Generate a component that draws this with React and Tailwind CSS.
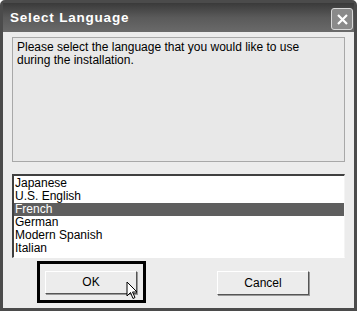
import React from "react";

const langs = ["Japanese", "U.S. English", "French", "German", "Modern Spanish", "Italian"];

const App = () => {
    const selected = "French";

    return (
        <div className="w-[359px] h-[312px] bg-white" style={{ fontFamily: "'Liberation Sans', Arial, sans-serif" }}>
            <div className="w-[357px] h-[311px] flex flex-col border-[3px] border-[#4b4b4b] rounded-t-[5px] bg-[#ececec]">

                {/* TITLE BAR */}
                <div className="h-[29px] flex items-center justify-between pl-[7px] pr-[1px] bg-gradient-to-b from-[#3a3a3a] via-[#5a5a5a] to-[#6a6a6a]">
                    <span className="text-white font-bold text-[13.5px] tracking-[0.8px] mt-[1px]">Select Language</span>
                    <div className="w-[22px] h-[22px] mt-[3px] rounded-[3px] border border-[#d8d8d8] bg-[#8a8a8a] flex items-center justify-center">
                        <svg width="13" height="13" viewBox="0 0 13 13">
                            <path d="M2 2 L11 11 M11 2 L2 11" stroke="white" strokeWidth="2.2" />
                        </svg>
                    </div>
                </div>

                {/* BODY */}
                <div className="flex-1 flex flex-col px-[9px] pt-[5px]">
                    <div className="h-[125px] border border-[#a8a8a8] bg-[#e8e8e8] px-[4px] pt-[3px] text-[12px] leading-[13px] text-black">
                        Please select the language that you would like to use
                        <br />
                        during the installation.
                    </div>

                    <div className="mt-[12px] h-[84px] bg-white border-t-2 border-l-2 border-t-[#404040] border-l-[#404040] border-b border-r border-b-white border-r-[#f4f4f4] flex flex-col pt-[1px]">
                        {langs.map((l) => (
                            <div
                                key={l}
                                className={`h-[13px] leading-[13px] text-[12px] pl-[1px] ${
                                    l === selected ? "bg-[#5e5e5e] text-white" : "text-black"
                                }`}
                            >
                                {l}
                            </div>
                        ))}
                    </div>

                    {/* BUTTONS */}
                    <div className="flex items-start justify-between pl-[25px] pr-[36px] pt-[3px]">
                        <div className="border-[3px] border-black pl-[5px] pr-[6px] pt-[5px] pb-[6px] relative">
                            <button className="w-[92px] h-[23px] bg-[#ececec] border border-t-white border-l-white border-b-[#555] border-r-[#555] shadow-[1px_1px_0_#999] text-[12px] text-black">
                                OK
                            </button>
                            <svg className="absolute left-[86px] top-[17px]" width="14" height="20" viewBox="0 0 14 20">
                                <path d="M1 1 L1 15 L4.5 11.5 L7 17.5 L9 16.5 L6.5 11 L11 11 Z" fill="white" stroke="black" strokeWidth="1" />
                            </svg>
                        </div>
                        <button className="mt-[10px] w-[92px] h-[24px] bg-[#ececec] border border-t-white border-l-white border-b-[#555] border-r-[#555] shadow-[1px_1px_0_#999] text-[12px] text-black">
                            Cancel
                        </button>
                    </div>
                </div>
            </div>
        </div>
    );
};

export default App;
